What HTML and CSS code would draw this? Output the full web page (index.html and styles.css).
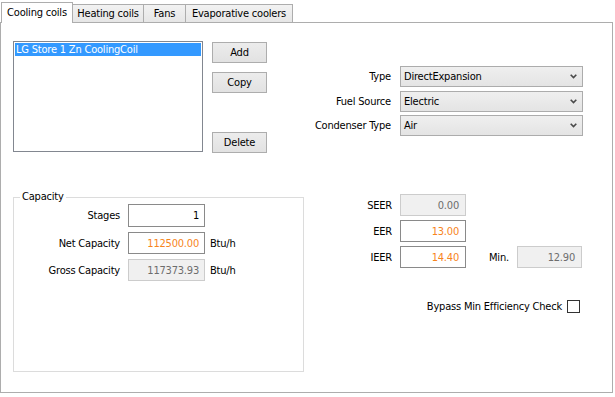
FILE: index.html
```html
<!DOCTYPE html>
<html>
<head>
<meta charset="utf-8">
<link rel="stylesheet" href="styles.css">
</head>
<body>
<div class="tabs">
  <div class="tab active t-cool">Cooling coils</div>
  <div class="tab t-heat">Heating coils</div>
  <div class="tab t-fans">Fans</div>
  <div class="tab t-evap">Evaporative coolers</div>
</div>
<div class="pane">
  <div class="top">
    <div class="list">
      <div class="item selected">LG Store 1 Zn CoolingCoil</div>
    </div>
    <div class="buttons">
      <div class="btn">Add</div>
      <div class="btn">Copy</div>
      <div class="btn delete">Delete</div>
    </div>
    <div class="selects">
      <div class="lbl">Type</div>
      <div class="select"><span>DirectExpansion</span><svg class="chev" width="7" height="5" viewBox="0 0 7 5"><path d="M0.7 0.7 L3.5 3.6 L6.3 0.7" fill="none" stroke="#4a4a4a" stroke-width="1.6"/></svg></div>
      <div class="lbl">Fuel Source</div>
      <div class="select"><span>Electric</span><svg class="chev" width="7" height="5" viewBox="0 0 7 5"><path d="M0.7 0.7 L3.5 3.6 L6.3 0.7" fill="none" stroke="#4a4a4a" stroke-width="1.6"/></svg></div>
      <div class="lbl">Condenser Type</div>
      <div class="select"><span>Air</span><svg class="chev" width="7" height="5" viewBox="0 0 7 5"><path d="M0.7 0.7 L3.5 3.6 L6.3 0.7" fill="none" stroke="#4a4a4a" stroke-width="1.6"/></svg></div>
    </div>
  </div>
  <div class="bottom">
    <fieldset class="group">
      <legend>Capacity</legend>
      <div class="capgrid">
        <div class="lbl">Stages</div>
        <div class="field">1</div>
        <div></div>
        <div class="lbl">Net Capacity</div>
        <div class="field orange">112500.00</div>
        <div class="unit">Btu/h</div>
        <div class="lbl">Gross Capacity</div>
        <div class="field disabled">117373.93</div>
        <div class="unit">Btu/h</div>
      </div>
    </fieldset>
    <div class="eff">
      <div class="effgrid">
        <div class="lbl">SEER</div>
        <div class="field disabled">0.00</div>
        <div></div><div></div>
        <div class="lbl">EER</div>
        <div class="field orange">13.00</div>
        <div></div><div></div>
        <div class="lbl">IEER</div>
        <div class="field orange">14.40</div>
        <div class="minlbl">Min.</div>
        <div class="field disabled">12.90</div>
      </div>
      <div class="bypass">
        <span>Bypass Min Efficiency Check</span>
        <span class="check"></span>
      </div>
    </div>
  </div>
</div>
</body>
</html>
```

FILE: styles.css
```css
* { box-sizing: border-box; }
html, body { margin: 0; padding: 0; background: #ffffff; }
body {
  font-family: "DejaVu Sans Condensed", "DejaVu Sans", sans-serif;
  font-stretch: condensed;
  font-size: 11px;
  letter-spacing: -0.2px;
  color: #000;
  width: 615px;
  height: 397px;
  overflow: hidden;
}

.tabs {
  display: flex;
  align-items: flex-end;
  height: 22px;
  padding-left: 1px;
}
.tab {
  height: 18px;
  border: 1px solid #adadad;
  border-bottom: none;
  background: linear-gradient(#f2f2f2, #e6e6e6);
  padding-top: 2px;
  line-height: 13px;
  margin-left: -1px;
  white-space: nowrap;
  text-align: center;
  flex: none;
}
.tab.active {
  margin-left: 0;
  height: 21px;
  margin-bottom: -1px;
  background: #ffffff;
  position: relative;
  z-index: 1;
  padding-top: 3px;
}
.t-cool { width: 72px; }
.t-heat { width: 72px; }
.t-fans { width: 43px; }
.t-evap { width: 108px; }

.pane {
  width: 613px;
  height: 371px;
  border: 1px solid #adadad;
  padding: 18px 0 0 12px;
}

.top {
  display: flex;
  align-items: flex-start;
}
.list {
  width: 190px;
  height: 111px;
  border: 1px solid #828790;
  padding: 1px;
}
.item {
  height: 13px;
  line-height: 13px;
  padding-left: 1px;
  white-space: nowrap;
}
.item.selected {
  background: #3399ff;
  color: #fff;
}
.buttons {
  display: flex;
  flex-direction: column;
  gap: 9px;
  margin-left: 9px;
  margin-top: 1px;
}
.btn {
  width: 55px;
  height: 21px;
  border: 1px solid #adadad;
  background: linear-gradient(#ececec, #e2e2e2);
  text-align: center;
  line-height: 19px;
}
.btn.delete { margin-top: 30px; }

.selects {
  margin-left: 13px;
  margin-top: 25px;
  display: grid;
  grid-template-columns: 111px 183px;
  grid-auto-rows: 21px;
  column-gap: 9px;
  row-gap: 3.5px;
}
.lbl {
  display: flex;
  align-items: center;
  justify-content: flex-end;
  white-space: nowrap;
}
.select {
  border: 1px solid #acacac;
  background: linear-gradient(#efefef, #e4e4e4);
  display: flex;
  align-items: center;
  justify-content: space-between;
  padding: 0 5px 0 3px;
}
.chev { display: block; }

.bottom {
  display: flex;
  align-items: flex-start;
  margin-top: 37px;
}
.group {
  margin: 0;
  width: 291px;
  height: 182px;
  border: 1px solid #dcdcdc;
  padding: 0 6px 0 6px;
}
.group legend {
  padding: 0 2px;
  line-height: 14px;
  height: 14px;
}
.capgrid {
  display: grid;
  grid-template-columns: 100px 77px auto;
  grid-template-rows: 23px 22px 22px;
  column-gap: 8px;
  row-gap: 5px;
}
.unit {
  display: flex;
  align-items: center;
  margin-left: -3px;
}
.field {
  border: 1px solid #8a8a8a;
  background: #fff;
  display: flex;
  align-items: center;
  justify-content: flex-end;
  padding-right: 5px;
}
.field.orange { color: #f7851e; }
.field.disabled {
  background: #f0f0f0;
  border-color: #cccccc;
  color: #6d6d6d;
}

.eff {
  margin-left: 28px;
  margin-top: 4px;
  width: 250px;
}
.effgrid {
  display: grid;
  grid-template-columns: 60px 66px 35px 65px;
  grid-auto-rows: 22px;
  column-gap: 8px;
  row-gap: 4px;
}
.effgrid .field { padding-right: 6px; }
.minlbl {
  display: flex;
  align-items: center;
  padding-left: 15px;
}
.bypass {
  margin-top: 32px;
  display: flex;
  justify-content: flex-end;
  align-items: center;
  gap: 5px;
  padding-right: 2px;
  height: 13px;
}
.check {
  width: 13px;
  height: 13px;
  border: 1px solid #333;
  background: #fff;
}
```
